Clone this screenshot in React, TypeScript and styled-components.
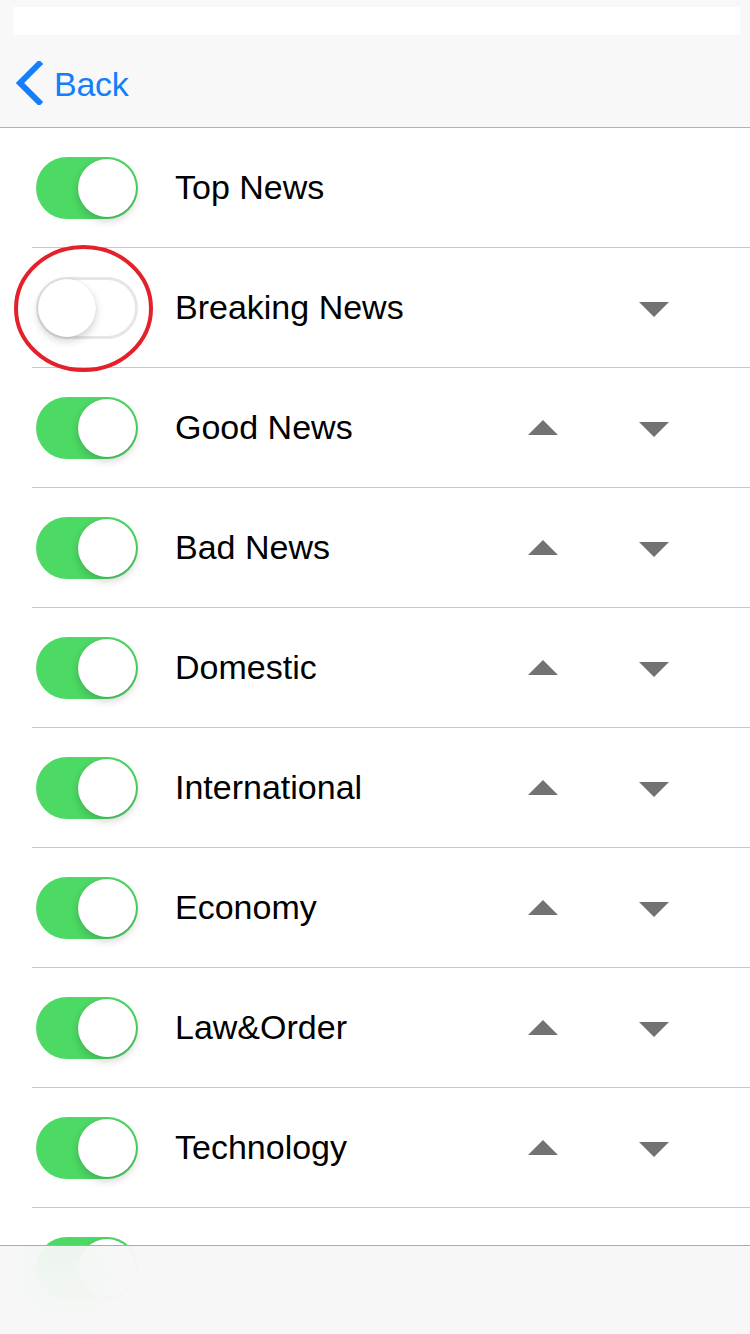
import styled, { createGlobalStyle } from "styled-components";

type Channel = {
  label: string;
  on: boolean;
  up: boolean;
  down: boolean;
  marked?: boolean;
};

const channels: Channel[] = [
  { label: "Top News", on: true, up: false, down: false },
  { label: "Breaking News", on: false, up: false, down: true, marked: true },
  { label: "Good News", on: true, up: true, down: true },
  { label: "Bad News", on: true, up: true, down: true },
  { label: "Domestic", on: true, up: true, down: true },
  { label: "International", on: true, up: true, down: true },
  { label: "Economy", on: true, up: true, down: true },
  { label: "Law&Order", on: true, up: true, down: true },
  { label: "Technology", on: true, up: true, down: true },
  { label: "", on: true, up: false, down: false },
];

const Switch = ({ on }: { on: boolean }) => (
  <Track $on={on}>
    <Knob $on={on} />
  </Track>
);

const Arrow = ({ dir }: { dir: "up" | "down" }) => (
  <svg width="30" height="15" viewBox="0 0 30 15">
    {dir === "up" ? (
      <polygon points="15,0 30,15 0,15" fill="#727272" />
    ) : (
      <polygon points="0,0 30,0 15,15" fill="#727272" />
    )}
  </svg>
);

const Mark = () => (
  <MarkBox width="139" height="127" viewBox="0 0 139 127">
    <ellipse cx="69.5" cy="63.5" rx="67.5" ry="61.5" fill="none" stroke="#e3212b" strokeWidth="4" />
  </MarkBox>
);

const App = () => {
  return (
    <>
      <GlobalStyle />
      <Page>
        <NavBar>
          <StatusStrip />
          <BackRow>
            <BackButton>
              <svg width="28" height="44" viewBox="0 0 28 44">
                <polyline
                  points="24,3 5,22 24,41"
                  fill="none"
                  stroke="#157efb"
                  strokeWidth="6"
                  strokeLinecap="square"
                />
              </svg>
              <span>Back</span>
            </BackButton>
          </BackRow>
        </NavBar>

        <List>
          {channels.map((c, i) => (
            <Row key={i}>
              {c.marked && <Mark />}
              <Switch on={c.on} />
              <Label>{c.label}</Label>
              <Controls>
                <ArrowCell>{c.up && <Arrow dir="up" />}</ArrowCell>
                <ArrowCell $low>{c.down && <Arrow dir="down" />}</ArrowCell>
              </Controls>
            </Row>
          ))}
        </List>

        <ToolBar />
      </Page>
    </>
  );
};

export default App;

const GlobalStyle = createGlobalStyle`
  html, body {
    margin: 0;
    padding: 0;
    background: #ffffff;
    overflow: hidden;
  }
  body {
    font-family: "Liberation Sans", Helvetica, Arial, sans-serif;
    -webkit-font-smoothing: antialiased;
  }
`;

const Page = styled.div`
  width: 750px;
  height: 1334px;
  position: relative;
  overflow: hidden;
  background: #ffffff;
`;

const NavBar = styled.div`
  height: 127px;
  background: #f8f8f8;
  border-bottom: 1px solid #b2b2b2;
  display: flex;
  flex-direction: column;
`;

const StatusStrip = styled.div`
  height: 28px;
  margin: 7px 10px 0 13px;
  background: #ffffff;
`;

const BackRow = styled.div`
  flex: 1;
  display: flex;
  align-items: center;
  padding-left: 15px;
  padding-top: 3px;
`;

const BackButton = styled.div`
  display: flex;
  align-items: center;
  gap: 11px;
  color: #157efb;
  font-size: 34px;
  letter-spacing: -0.3px;
  cursor: pointer;
  span {
    line-height: 1;
    padding-top: 2px;
  }
`;

const List = styled.div`
  display: flex;
  flex-direction: column;
`;

const Row = styled.div`
  position: relative;
  height: 119px;
  margin-left: 32px;
  padding-left: 4px;
  border-bottom: 1px solid #c8c8c8;
  display: flex;
  align-items: center;
`;

const Track = styled.div<{ $on: boolean }>`
  position: relative;
  box-sizing: border-box;
  width: 102px;
  height: 62px;
  border-radius: 31px;
  flex-shrink: 0;
  background: ${(p) => (p.$on ? "#4cd964" : "#ffffff")};
  border: ${(p) => (p.$on ? "none" : "3px solid #e6e6e6")};
`;

const Knob = styled.div<{ $on: boolean }>`
  position: absolute;
  width: 58px;
  height: 58px;
  border-radius: 50%;
  background: #ffffff;
  top: ${(p) => (p.$on ? "2px" : "-1px")};
  left: ${(p) => (p.$on ? "42px" : "-1px")};
  box-shadow: 0 4px 8px rgba(0, 0, 0, 0.18), 0 0 0 0.5px rgba(0, 0, 0, 0.08);
`;

const Label = styled.div`
  margin-left: 37px;
  font-size: 34px;
  color: #000000;
  flex: 1;
`;

const Controls = styled.div`
  display: flex;
  margin-right: 41px;
`;

const ArrowCell = styled.div<{ $low?: boolean }>`
  width: 111px;
  height: 30px;
  display: flex;
  align-items: center;
  justify-content: center;
  padding-top: ${(p) => (p.$low ? "4px" : "0")};
  box-sizing: border-box;
`;

const MarkBox = styled.svg`
  position: absolute;
  left: -18px;
  top: -3px;
  pointer-events: none;
`;

const ToolBar = styled.div`
  position: absolute;
  left: 0;
  right: 0;
  bottom: 0;
  height: 88px;
  border-top: 1px solid #ababab;
  background: rgba(246, 246, 246, 0.92);
  backdrop-filter: blur(30px);
  -webkit-backdrop-filter: blur(30px);
`;
